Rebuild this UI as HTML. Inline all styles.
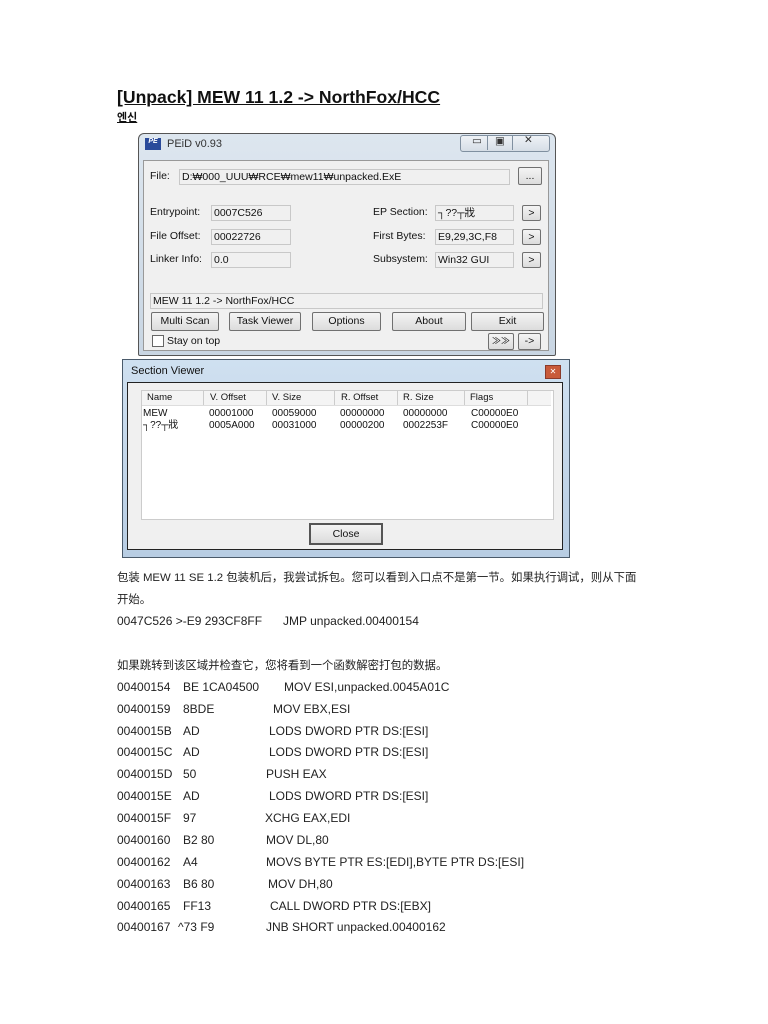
<!DOCTYPE html>
<html><head><meta charset="utf-8"><style>
body{margin:0;width:768px;height:1024px;background:#fff;position:relative;overflow:hidden;font-family:"Liberation Sans","Noto Sans CJK SC",sans-serif;}
.a{position:absolute;white-space:nowrap}
.t{font-size:12px;color:#222}
.c{font-size:11.4px;color:#222}
.w{font-family:"Liberation Sans","DejaVu Sans",sans-serif;font-size:10.5px;color:#111}
.fld{position:absolute;background:#f0f0f0;border:1px solid #c8c8c8;height:14px;font-size:10.5px;line-height:14px;padding-left:2px;color:#111}
.btn{position:absolute;border:1px solid #707070;background:linear-gradient(#f4f4f4,#dcdcdc);border-radius:2px;font-size:10.5px;text-align:center;color:#111}
</style></head><body>
<div class="a" style="left:117px;top:87px;font-size:17.6px;font-weight:bold;text-decoration:underline;color:#111">[Unpack] MEW 11 1.2 -&gt; NorthFox/HCC</div>
<div class="a" style="left:117px;top:109px;font-size:11px;font-weight:bold;text-decoration:underline;font-family:'Noto Sans CJK KR',sans-serif;color:#111">엔신</div>

<div class="a" style="left:138px;top:133px;width:416px;height:221px;border:1px solid #555;border-radius:6px 6px 2px 2px;background:linear-gradient(#dde6ef,#c9d6e3)"></div>
<div class="a" style="left:145px;top:138px;width:16px;height:12px;background:#2a4a9a;color:#fff;font-size:7px;font-style:italic;font-weight:bold;text-align:center">PE</div>
<div class="a w" style="left:167px;top:138px;font-size:11px;color:#333">PEiD v0.93</div>
<div class="a" style="left:460px;top:135px;width:88px;height:15px;border:1px solid #8090a0;border-radius:3px;background:linear-gradient(#eef2f6,#d6dee6)"></div>
<div class="a" style="left:487px;top:135px;width:1px;height:15px;background:#8090a0"></div>
<div class="a" style="left:512px;top:135px;width:1px;height:15px;background:#8090a0"></div>
<div class="a w" style="left:472px;top:135px;color:#333">▭</div>
<div class="a w" style="left:495px;top:135px;color:#333">▣</div>
<div class="a w" style="left:524px;top:134px;color:#333">✕</div>
<div class="a" style="left:143px;top:160px;width:404px;height:189px;background:#f0f0f0;border:1px solid #999"></div>
<div class="a w" style="left:150px;top:170px">File:</div>
<div class="fld" style="left:179px;top:169px;width:327px">D:₩000_UUU₩RCE₩mew11₩unpacked.ExE</div>
<div class="btn" style="left:518px;top:167px;width:22px;height:16px;line-height:16px">...</div>
<div class="a w" style="left:150px;top:206px">Entrypoint:</div>
<div class="fld" style="left:211px;top:205px;width:76px">0007C526</div>
<div class="a w" style="left:150px;top:230px">File Offset:</div>
<div class="fld" style="left:211px;top:229px;width:76px">00022726</div>
<div class="a w" style="left:150px;top:253px">Linker Info:</div>
<div class="fld" style="left:211px;top:252px;width:76px">0.0</div>
<div class="a w" style="left:373px;top:206px">EP Section:</div>
<div class="fld" style="left:435px;top:205px;width:75px">┐??┬戕</div>
<div class="a w" style="left:373px;top:230px">First Bytes:</div>
<div class="fld" style="left:435px;top:229px;width:75px">E9,29,3C,F8</div>
<div class="a w" style="left:373px;top:253px">Subsystem:</div>
<div class="fld" style="left:435px;top:252px;width:75px">Win32 GUI</div>
<div class="btn" style="left:522px;top:205px;width:17px;height:14px;line-height:14px">&gt;</div>
<div class="btn" style="left:522px;top:229px;width:17px;height:14px;line-height:14px">&gt;</div>
<div class="btn" style="left:522px;top:252px;width:17px;height:14px;line-height:14px">&gt;</div>
<div class="fld" style="left:150px;top:293px;width:389px;background:#f0f0f0">MEW 11 1.2 -&gt; NorthFox/HCC</div>
<div class="btn" style="left:151px;top:312px;width:66px;height:17px;line-height:17px">Multi Scan</div>
<div class="btn" style="left:229px;top:312px;width:70px;height:17px;line-height:17px">Task Viewer</div>
<div class="btn" style="left:312px;top:312px;width:67px;height:17px;line-height:17px">Options</div>
<div class="btn" style="left:392px;top:312px;width:72px;height:17px;line-height:17px">About</div>
<div class="btn" style="left:471px;top:312px;width:71px;height:17px;line-height:17px">Exit</div>
<div class="a" style="left:152px;top:335px;width:10px;height:10px;border:1px solid #666;background:#fff"></div>
<div class="a w" style="left:167px;top:335px">Stay on top</div>
<div class="btn" style="left:488px;top:333px;width:24px;height:15px;line-height:15px;font-size:9px">≫≫</div>
<div class="btn" style="left:518px;top:333px;width:21px;height:15px;line-height:15px">-&gt;</div>

<div class="a" style="left:122px;top:359px;width:446px;height:197px;border:1px solid #4a5a6a;background:linear-gradient(#cfe0f0,#b8cde3)"></div>
<div class="a w" style="left:131px;top:365px;font-size:11px">Section Viewer</div>
<div class="a" style="left:545px;top:365px;width:14px;height:12px;background:#c85a3a;border:1px solid #8a3a2a;color:#fff;font-size:8px;text-align:center;line-height:12px">✕</div>
<div class="a" style="left:127px;top:382px;width:434px;height:166px;background:#f0f0f0;border:1px solid #222"></div>
<div class="a" style="left:141px;top:390px;width:411px;height:128px;background:#fff;border:1px solid #ccc"></div>
<div class="a" style="left:142px;top:391px;width:409px;height:14px;background:#f4f4f4;border-bottom:1px solid #ddd"></div>
<div class="a w" style="left:147px;top:392px;font-size:9.5px">Name</div>
<div class="a w" style="left:210px;top:392px;font-size:9.5px">V. Offset</div>
<div class="a w" style="left:272px;top:392px;font-size:9.5px">V. Size</div>
<div class="a w" style="left:341px;top:392px;font-size:9.5px">R. Offset</div>
<div class="a w" style="left:403px;top:392px;font-size:9.5px">R. Size</div>
<div class="a w" style="left:470px;top:392px;font-size:9.5px">Flags</div>
<div class="a" style="left:203px;top:391px;width:1px;height:14px;background:#ccc"></div>
<div class="a" style="left:266px;top:391px;width:1px;height:14px;background:#ccc"></div>
<div class="a" style="left:334px;top:391px;width:1px;height:14px;background:#ccc"></div>
<div class="a" style="left:397px;top:391px;width:1px;height:14px;background:#ccc"></div>
<div class="a" style="left:464px;top:391px;width:1px;height:14px;background:#ccc"></div>
<div class="a" style="left:527px;top:391px;width:1px;height:14px;background:#ccc"></div>
<div class="a w" style="left:143px;top:408px;font-size:10px;line-height:12px">MEW<br>┐??┬戕</div>
<div class="a w" style="left:209px;top:408px;font-size:10px;line-height:12px">00001000<br>0005A000</div>
<div class="a w" style="left:272px;top:408px;font-size:10px;line-height:12px">00059000<br>00031000</div>
<div class="a w" style="left:340px;top:408px;font-size:10px;line-height:12px">00000000<br>00000200</div>
<div class="a w" style="left:403px;top:408px;font-size:10px;line-height:12px">00000000<br>0002253F</div>
<div class="a w" style="left:471px;top:408px;font-size:10px;line-height:12px">C00000E0<br>C00000E0</div>
<div class="btn" style="left:309px;top:523px;width:70px;height:18px;line-height:18px;border:2px solid #555;border-radius:0">Close</div>

<div class="a c" style="left:117px;top:569px">包装 MEW 11 SE 1.2 包装机后，我尝试拆包。您可以看到入口点不是第一节。如果执行调试，则从下面</div>
<div class="a c" style="left:117px;top:591px">开始。</div>
<div class="a t" style="left:117px;top:614px">0047C526 &gt;-E9 293CF8FF</div>
<div class="a t" style="left:283px;top:614px">JMP unpacked.00400154</div>
<div class="a c" style="left:117px;top:657px">如果跳转到该区域并检查它，您将看到一个函数解密打包的数据。</div>
<div class="a t" style="left:117px;top:680px">00400154</div><div class="a t" style="left:183px;top:680px">BE 1CA04500</div><div class="a t" style="left:284px;top:680px">MOV ESI,unpacked.0045A01C</div>
<div class="a t" style="left:117px;top:702px">00400159</div><div class="a t" style="left:183px;top:702px">8BDE</div><div class="a t" style="left:273px;top:702px">MOV EBX,ESI</div>
<div class="a t" style="left:117px;top:724px">0040015B</div><div class="a t" style="left:183px;top:724px">AD</div><div class="a t" style="left:269px;top:724px">LODS DWORD PTR DS:[ESI]</div>
<div class="a t" style="left:117px;top:745px">0040015C</div><div class="a t" style="left:183px;top:745px">AD</div><div class="a t" style="left:269px;top:745px">LODS DWORD PTR DS:[ESI]</div>
<div class="a t" style="left:117px;top:767px">0040015D</div><div class="a t" style="left:183px;top:767px">50</div><div class="a t" style="left:266px;top:767px">PUSH EAX</div>
<div class="a t" style="left:117px;top:789px">0040015E</div><div class="a t" style="left:183px;top:789px">AD</div><div class="a t" style="left:269px;top:789px">LODS DWORD PTR DS:[ESI]</div>
<div class="a t" style="left:117px;top:811px">0040015F</div><div class="a t" style="left:183px;top:811px">97</div><div class="a t" style="left:265px;top:811px">XCHG EAX,EDI</div>
<div class="a t" style="left:117px;top:833px">00400160</div><div class="a t" style="left:183px;top:833px">B2 80</div><div class="a t" style="left:266px;top:833px">MOV DL,80</div>
<div class="a t" style="left:117px;top:855px">00400162</div><div class="a t" style="left:183px;top:855px">A4</div><div class="a t" style="left:266px;top:855px">MOVS BYTE PTR ES:[EDI],BYTE PTR DS:[ESI]</div>
<div class="a t" style="left:117px;top:877px">00400163</div><div class="a t" style="left:183px;top:877px">B6 80</div><div class="a t" style="left:268px;top:877px">MOV DH,80</div>
<div class="a t" style="left:117px;top:899px">00400165</div><div class="a t" style="left:183px;top:899px">FF13</div><div class="a t" style="left:270px;top:899px">CALL DWORD PTR DS:[EBX]</div>
<div class="a t" style="left:117px;top:920px">00400167</div><div class="a t" style="left:178px;top:920px">^73 F9</div><div class="a t" style="left:266px;top:920px">JNB SHORT unpacked.00400162</div>
</body></html>
